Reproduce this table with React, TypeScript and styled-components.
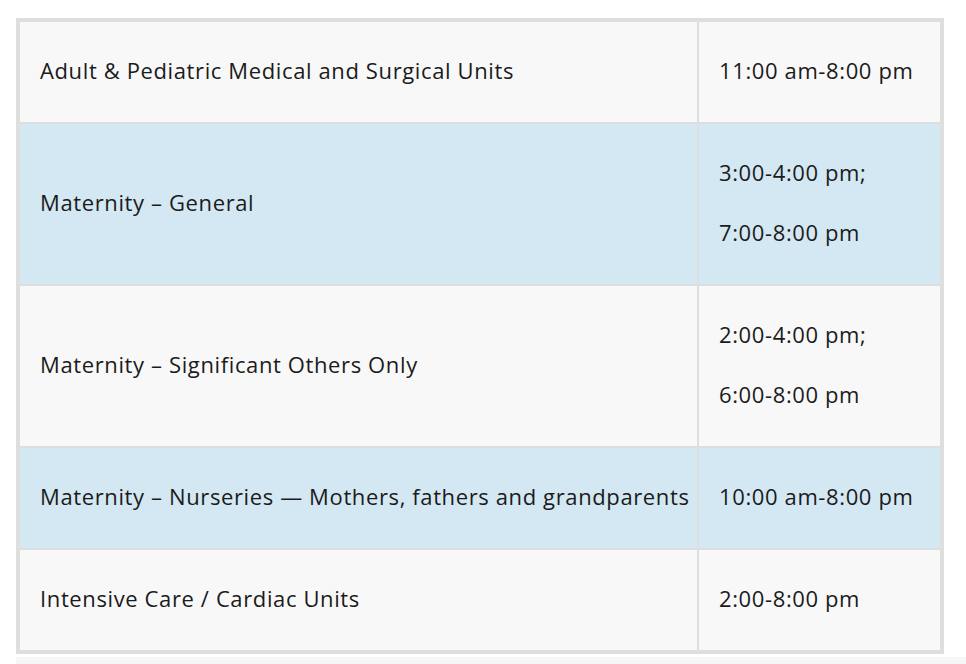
import React from "react";
import styled, { createGlobalStyle } from "styled-components";

const Global = createGlobalStyle`
  html, body { margin: 0; padding: 0; background: #ffffff; }
  body { font-family: "Open Sans", Lato, sans-serif; }
`;

const Page = styled.div`
  padding: 18px 0 0 16px;
`;

const Table = styled.div`
  width: 928px;
  box-sizing: border-box;
  border: 4px solid #dedede;
  background: #dedede;
  display: grid;
  grid-template-columns: 677px 241px;
  row-gap: 2px;
  column-gap: 2px;
`;

const Cell = styled.div<{ $alt: boolean }>`
  background: ${(p) => (p.$alt ? "#d3e8f3" : "#f8f8f8")};
  padding: 33px 20px 37px;
  display: flex;
  flex-direction: column;
  justify-content: center;
  gap: 30px;
  overflow: hidden;
`;

const Line = styled.p`
  margin: 0;
  font-size: 22px;
  letter-spacing: 0.62px;
  line-height: 30px;
  color: #1b1b1b;
  white-space: nowrap;
`;

const Band = styled.div`
  margin: 3px 0 0 0;
  height: 20px;
  background: #f6f6f6;
`;

const rows: { unit: string; times: string[] }[] = [
  { unit: "Adult & Pediatric Medical and Surgical Units", times: ["11:00 am-8:00 pm"] },
  { unit: "Maternity – General", times: ["3:00-4:00 pm;", "7:00-8:00 pm"] },
  { unit: "Maternity – Significant Others Only", times: ["2:00-4:00 pm;", "6:00-8:00 pm"] },
  { unit: "Maternity – Nurseries — Mothers, fathers and grandparents", times: ["10:00 am-8:00 pm"] },
  { unit: "Intensive Care / Cardiac Units", times: ["2:00-8:00 pm"] },
];

export default function App() {
  return (
    <>
      <Global />
      <Page>
        <Table>
          {rows.map((r, i) => (
            <React.Fragment key={i}>
              <Cell $alt={i % 2 === 1}>
                <Line>{r.unit}</Line>
              </Cell>
              <Cell $alt={i % 2 === 1}>
                {r.times.map((t) => (
                  <Line key={t}>{t}</Line>
                ))}
              </Cell>
            </React.Fragment>
          ))}
        </Table>
        <Band />
      </Page>
    </>
  );
}
